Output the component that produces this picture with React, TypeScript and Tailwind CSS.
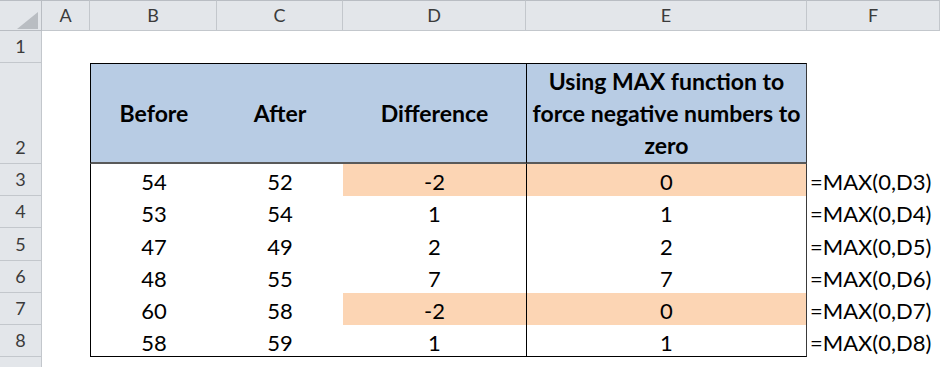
const rows = [
  { n: 3, b: "54", c: "52", d: "-2", e: "0", hl: true },
  { n: 4, b: "53", c: "54", d: "1", e: "1", hl: false },
  { n: 5, b: "47", c: "49", d: "2", e: "2", hl: false },
  { n: 6, b: "48", c: "55", d: "7", e: "7", hl: false },
  { n: 7, b: "60", c: "58", d: "-2", e: "0", hl: true },
  { n: 8, b: "58", c: "59", d: "1", e: "1", hl: false },
];

const font = "font-['Lato','Liberation_Sans',sans-serif]";

function RowHead({ label }: { label: string }) {
  return (
    <div className="flex items-center justify-center bg-[#e3e6ea] border-r border-b border-[#c3c7cc] text-[18px] text-[#3b3b3b]">
      {label}
    </div>
  );
}

export default function App() {
  return (
    <div
      className={`w-[940px] h-[367px] overflow-hidden bg-white ${font} grid grid-cols-[42px_48px_127px_126px_183px_281px_133px] grid-rows-[31px_32px_101px_32px_32px_33px_32px_32px_32px_10px]`}
    >
      {/* column headers */}
      <div className="relative bg-[#e3e6ea] border-t border-r border-b border-[#b9bdc3]">
        <svg className="absolute left-[17px] top-[11px]" width="21" height="17" viewBox="0 0 21 17">
          <polygon points="21,0 21,17 0,17" fill="#b9bdc2" />
        </svg>
      </div>
      {["A", "B", "C", "D", "E", "F"].map((l) => (
        <div
          key={l}
          className="flex items-center justify-center bg-[#e3e6ea] border-t border-r border-b border-[#c3c7cc] border-t-[#b9bdc3] text-[18px] text-[#3b3b3b]"
        >
          {l}
        </div>
      ))}

      {/* row 1 */}
      <RowHead label="1" />
      <div className="col-span-6" />

      {/* row 2 header */}
      <div className="flex items-end justify-center pb-[2px] bg-[#e3e6ea] border-r border-b border-[#c3c7cc] text-[18px] text-[#3b3b3b]">
        2
      </div>
      <div />
      <div className="flex items-center justify-center bg-[#b8cce4] border-l border-t border-b-2 border-l-black border-t-black border-b-[#595959] font-bold text-[23px] text-black">
        Before
      </div>
      <div className="flex items-center justify-center bg-[#b8cce4] border-t border-b-2 border-t-black border-b-[#595959] font-bold text-[23px] text-black">
        After
      </div>
      <div className="flex items-center justify-center bg-[#b8cce4] border-t border-b-2 border-t-black border-b-[#595959] font-bold text-[23px] text-black">
        Difference
      </div>
      <div className="flex items-center justify-center bg-[#b8cce4] border-l border-t border-r border-b-2 border-l-black border-t-black border-r-[#3a3a3a] border-b-[#595959] font-bold text-[23px] leading-[32px] text-black text-center whitespace-nowrap">
        Using MAX function to
        <br />
        force negative numbers to
        <br />
        zero
      </div>
      <div />

      {/* data rows */}
      {rows.map((r) => (
        <div key={r.n} className="contents">
          <RowHead label={String(r.n)} />
          <div />
          <div
            className={`flex items-center justify-center pt-[3px] border-l border-l-black text-[22px] text-black ${
              r.n === 8 ? "border-b border-b-black" : ""
            }`}
          >
            {r.b}
          </div>
          <div
            className={`flex items-center justify-center pt-[3px] text-[22px] text-black ${
              r.n === 8 ? "border-b border-b-black" : ""
            }`}
          >
            {r.c}
          </div>
          <div
            className={`flex items-center justify-center pt-[3px] text-[22px] text-black ${
              r.hl ? "bg-[#fcd5b4]" : ""
            } ${r.n === 8 ? "border-b border-b-black" : ""}`}
          >
            {r.d}
          </div>
          <div
            className={`flex items-center justify-center pt-[3px] border-l border-r border-l-black border-r-[#3a3a3a] text-[22px] text-black ${
              r.hl ? "bg-[#fcd5b4]" : ""
            } ${r.n === 8 ? "border-b border-b-black" : ""}`}
          >
            {r.e}
          </div>
          <div className="flex items-center pl-[3px] pt-[3px] text-[22px] text-black whitespace-nowrap">
            =MAX(0,D{r.n})
          </div>
        </div>
      ))}

      {/* row 9 partial */}
      <div className="bg-[#e3e6ea] border-r border-[#c3c7cc]" />
      <div className="col-span-6" />
    </div>
  );
}
